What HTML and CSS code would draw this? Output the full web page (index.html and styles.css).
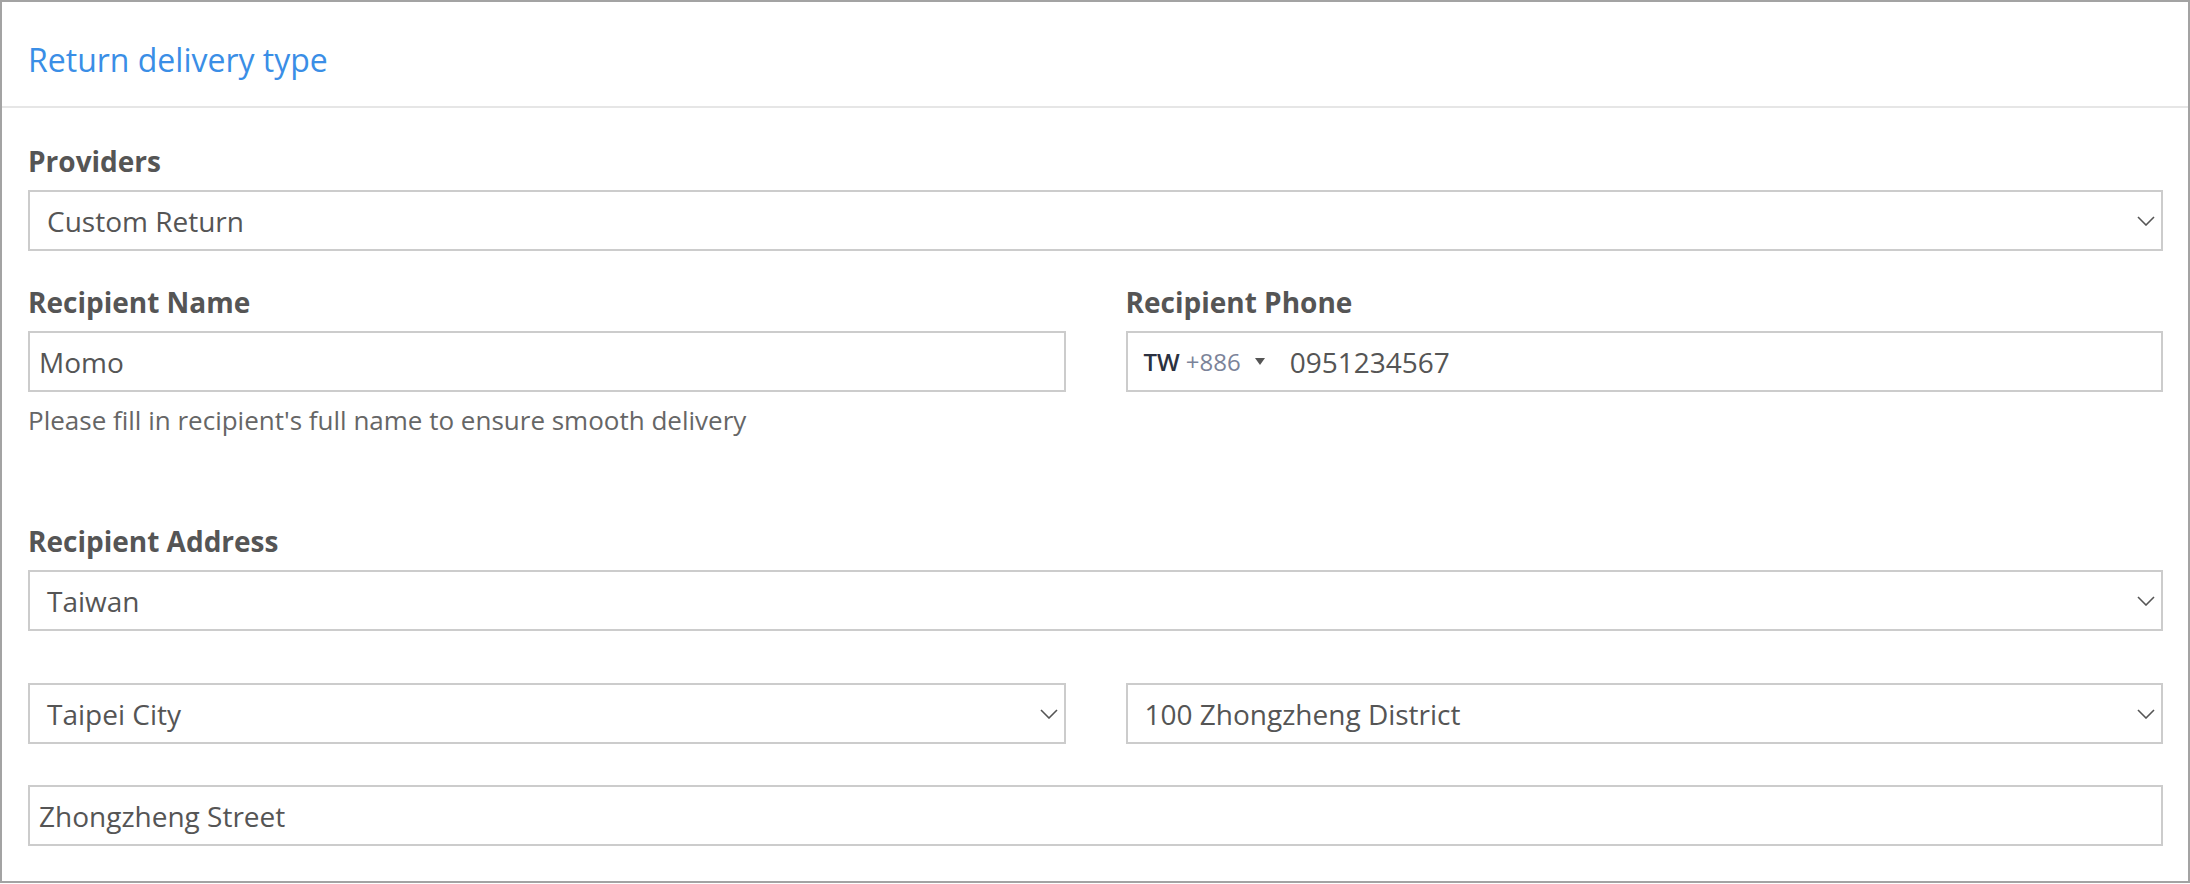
FILE: index.html
```html
<!DOCTYPE html>
<html lang="en">
<head>
  <meta charset="UTF-8">
  <title>Return delivery type</title>
  <link rel="stylesheet" href="styles.css">
</head>
<body>
  <div class="panel">
    <div class="panel-head">
      <h2 class="panel-title">Return delivery type</h2>
    </div>
    <div class="panel-body">
      <div class="field">
        <label class="field-label">Providers</label>
        <div class="select">
          <span>Custom Return</span>
          <svg class="chevron" width="18" height="10" viewBox="0 0 18 10"><polyline points="1,1 9,9 17,1" /></svg>
        </div>
      </div>

      <div class="row">
        <div class="field">
          <label class="field-label" for="name">Recipient Name</label>
          <input class="text-input" type="text" id="name" value="Momo">
          <p class="help">Please fill in recipient's full name to ensure smooth delivery</p>
        </div>
        <div class="field">
          <label class="field-label" for="phone">Recipient Phone</label>
          <div class="phone">
            <span class="country">
              <b>TW</b>
              <span class="dial">+886</span>
              <svg class="caret" width="10" height="8" viewBox="0 0 10 8"><polygon points="0,0 10,0 5,7" /></svg>
            </span>
            <input class="phone-input" type="text" id="phone" value="0951234567">
          </div>
        </div>
      </div>

      <div class="field address">
        <label class="field-label">Recipient Address</label>
        <div class="select country-select">
          <span>Taiwan</span>
          <svg class="chevron" width="18" height="10" viewBox="0 0 18 10"><polyline points="1,1 9,9 17,1" /></svg>
        </div>
        <div class="row city-row">
          <div class="select">
            <span>Taipei City</span>
            <svg class="chevron" width="18" height="10" viewBox="0 0 18 10"><polyline points="1,1 9,9 17,1" /></svg>
          </div>
          <div class="select">
            <span>100 Zhongzheng District</span>
            <svg class="chevron" width="18" height="10" viewBox="0 0 18 10"><polyline points="1,1 9,9 17,1" /></svg>
          </div>
        </div>
        <input class="text-input" type="text" value="Zhongzheng Street">
      </div>
    </div>
  </div>
</body>
</html>
```

FILE: styles.css
```css
* {
  box-sizing: border-box;
}
body {
  margin: 0;
  font-family: "Open Sans", "Noto Sans", sans-serif;
  color: #555;
  background: #fff;
}
.panel {
  border: 2px solid #a3a3a3;
  width: 2190px;
}
.panel-head {
  height: 106px;
  display: flex;
  align-items: center;
  padding: 10px 0 0 26px;
  border-bottom: 2px solid #e6e6e6;
}
.panel-title {
  margin: 0;
  font-size: 32px;
  font-weight: normal;
  color: #3a8ee6;
}
.panel-body {
  padding: 33px 25px 35px 26px;
}
.field {
  margin-bottom: 31px;
}
.field-label {
  display: block;
  font-size: 28px;
  font-weight: bold;
  line-height: 40px;
  margin-bottom: 9px;
  color: #555;
}
.select,
.text-input,
.phone {
  display: flex;
  align-items: center;
  width: 100%;
  height: 61px;
  border: 2px solid #ccc;
  background: #fff;
  font-family: inherit;
  font-size: 28px;
  color: #555;
}
.select {
  padding: 0 6px 0 17px;
}
.select span {
  flex: 1;
}
.chevron polyline {
  fill: none;
  stroke: #555;
  stroke-width: 1.6;
}
.text-input {
  padding: 0 9px;
  outline: none;
}
.row {
  display: grid;
  grid-template-columns: 1fr 1fr;
  column-gap: 60px;
}
.help {
  margin: 10px 0 52px;
  font-size: 26px;
  line-height: 36px;
  color: #666;
}
.phone {
  padding-left: 16px;
}
.country {
  display: flex;
  align-items: center;
  font-size: 24px;
}
.country b {
  font-weight: 600;
  color: #2b3140;
}
.dial {
  margin-left: 6px;
  color: #7b8399;
}
.caret {
  margin-left: 14px;
  fill: #555;
}
.phone-input {
  flex: 1;
  border: none;
  outline: none;
  margin-left: 25px;
  padding: 0;
  font-family: inherit;
  font-size: 28px;
  color: #555;
}
.country-select {
  margin-bottom: 52px;
}
.city-row {
  margin-bottom: 41px;
}
.address {
  margin-bottom: 0;
}
```
